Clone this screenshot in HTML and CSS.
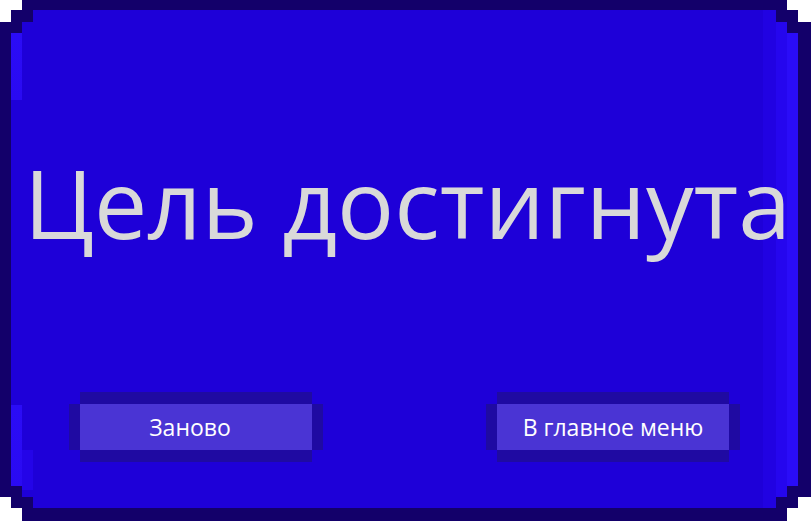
FILE: index.html
```html
<!DOCTYPE html>
<html lang="ru">
<head>
<meta charset="utf-8">
<title>Цель достигнута</title>
<link rel="stylesheet" href="styles.css">
</head>
<body>
<div class="frame">
  <div class="panel">
    <h1 class="title">Цель достигнута</h1>
    <div class="actions">
      <button class="btn btn-restart">Заново</button>
      <button class="btn">В главное меню</button>
    </div>
  </div>
</div>
</body>
</html>
```
FILE: styles.css
```css
html, body {
  margin: 0;
  padding: 0;
  background: #ffffff;
}

.frame {
  width: 811px;
  height: 521px;
  box-sizing: border-box;
  padding: 10px 13px 13px 11px;
  background: #13006a;
  clip-path: polygon(22px 0, 787px 0, 787px 10px, 798px 10px, 798px 22px, 811px 22px,
    811px 497px, 798px 497px, 798px 508px, 787px 508px, 787px 521px, 22px 521px,
    22px 508px, 11px 508px, 11px 497px, 0 497px, 0 22px, 11px 22px, 11px 10px, 22px 10px);
}

.panel {
  width: 100%;
  height: 100%;
  display: flex;
  flex-direction: column;
  align-items: stretch;
  background-color: #1e00d8;
  background-image:
    linear-gradient(to left, #2a0cf8 0 11px, #2506ee 11px 22px, #2102e2 22px 35px, transparent 35px),
    linear-gradient(#2b0cf6, #2a0af2),
    linear-gradient(#2b0cf6, #2a0af2),
    linear-gradient(#2404e8, #2404e8);
  background-repeat: no-repeat;
  background-size: 35px 100%, 11px 67px, 11px 90px, 11px 40px;
  background-position: right top, 0 23px, 0 395px, 11px 440px;
  clip-path: polygon(22px 0, calc(100% - 22px) 0, calc(100% - 22px) 12px, calc(100% - 11px) 12px,
    calc(100% - 11px) 23px, 100% 23px, 100% calc(100% - 22px), calc(100% - 11px) calc(100% - 22px),
    calc(100% - 11px) calc(100% - 11px), calc(100% - 22px) calc(100% - 11px), calc(100% - 22px) 100%,
    22px 100%, 22px calc(100% - 11px), 11px calc(100% - 11px), 11px calc(100% - 22px), 0 calc(100% - 22px),
    0 23px, 11px 23px, 11px 12px, 22px 12px);
}

.title {
  margin: 143px 0 0 0;
  padding-left: 6px;
  font-family: "Open Sans", "Noto Sans", sans-serif;
  font-weight: 400;
  font-size: 95px;
  line-height: 98px;
  color: #d9d9d9;
  text-align: center;
  white-space: nowrap;
}

.actions {
  margin-top: 153px;
  padding: 0 69px;
  display: flex;
  justify-content: space-between;
}

.btn {
  width: 232px;
  height: 46px;
  padding: 0;
  border: 0;
  margin: 0;
  background: #4a34d4;
  color: #ffffff;
  font-family: "Open Sans", "Noto Sans", sans-serif;
  font-size: 23px;
  line-height: 46px;
  text-align: center;
  box-shadow: 0 -12px 0 #1f0aa2, 0 12px 0 #1f0aa2, -11px 0 0 #1f0aa2, 11px 0 0 #1f0aa2;
}

.btn-restart {
  padding-right: 12px;
}
```
